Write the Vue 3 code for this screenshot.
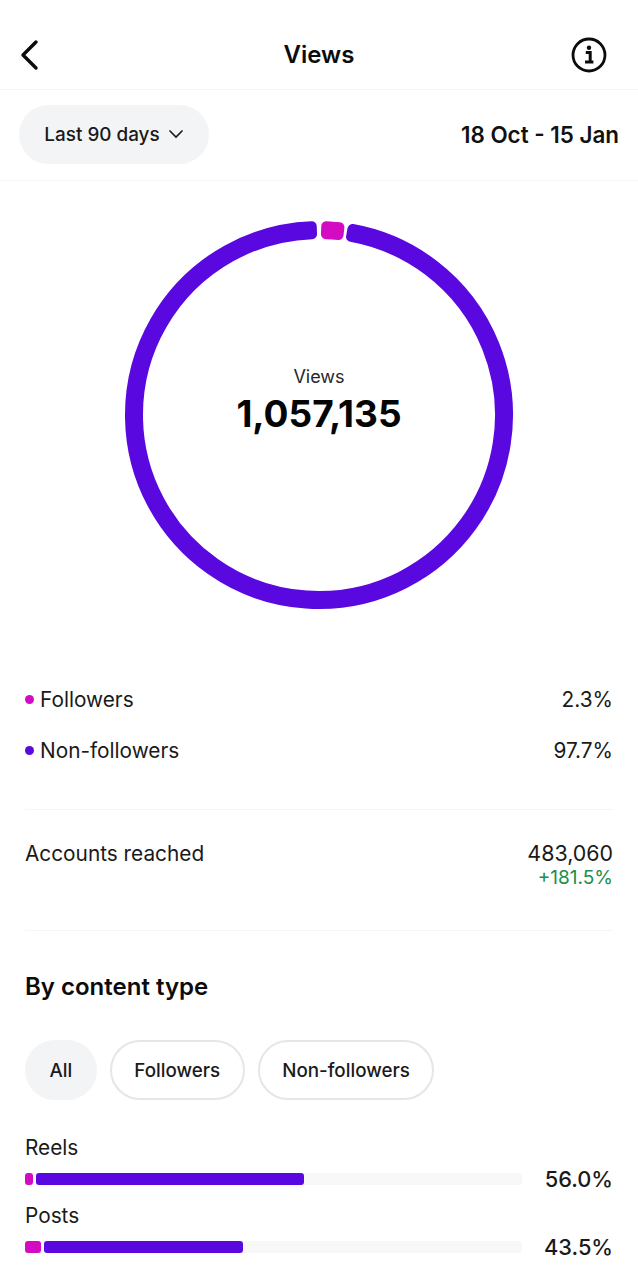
<script setup>
const ringCenter = 195
// ring segments in degrees from the top, filled then stroked so the ends come out rounded
const arc = (from, to) => {
  const outer = 189
  const inner = 181
  const pt = (r, deg) => {
    const a = (deg * Math.PI) / 180
    return `${(ringCenter + r * Math.sin(a)).toFixed(2)} ${(ringCenter - r * Math.cos(a)).toFixed(2)}`
  }
  const large = to - from > 180 ? 1 : 0
  return `M${pt(outer, from)} A${outer} ${outer} 0 ${large} 1 ${pt(outer, to)} L${pt(inner, to)} A${inner} ${inner} 0 ${large} 0 ${pt(inner, from)} Z`
}

const segments = [
  { color: '#5a08e0', d: arc(10.2, 357.8) },
  { color: '#d30cc4', d: arc(2.2, 6.2) }
]

const legend = [
  { label: 'Followers', value: '2.3%', color: '#d30cc4' },
  { label: 'Non-followers', value: '97.7%', color: '#5a08e0' }
]

const chips = ['All', 'Followers', 'Non-followers']

const content = [
  { label: 'Reels', value: '56.0%', pink: 8, purple: 268 },
  { label: 'Posts', value: '43.5%', pink: 16, purple: 199 }
]
</script>

<template>
  <div class="page">
    <header class="topbar">
      <svg class="back" width="22" height="32" viewBox="0 0 22 32">
        <path d="M17 3 L4 16 L17 29" fill="none" stroke="#0c0c0c" stroke-width="3.4" stroke-linecap="round" stroke-linejoin="round" />
      </svg>
      <h1 class="title">Views</h1>
      <svg class="info" width="36" height="36" viewBox="0 0 36 36">
        <circle cx="18" cy="18" r="16" fill="none" stroke="#0c0c0c" stroke-width="2.8" />
        <circle cx="18" cy="10.8" r="2.2" fill="#0c0c0c" />
        <path d="M14.8 15.6 H19.2 V24.4 M14 25 H22.4" fill="none" stroke="#0c0c0c" stroke-width="3" />
      </svg>
    </header>

    <div class="filter-row">
      <button class="range">
        Last 90 days
        <svg width="16" height="10" viewBox="0 0 16 10">
          <path d="M1.5 1.5 L8 8 L14.5 1.5" fill="none" stroke="#1a1a1a" stroke-width="1.6" />
        </svg>
      </button>
      <span class="dates">18 Oct - 15 Jan</span>
    </div>

    <section class="ring-wrap">
      <div class="ring">
        <svg width="390" height="390" viewBox="0 0 390 390">
          <path
            v-for="s in segments"
            :key="s.color"
            :d="s.d"
            :fill="s.color"
            :stroke="s.color"
            stroke-width="10"
            stroke-linejoin="round"
          />
        </svg>
        <div class="ring-text">
          <span class="ring-label">Views</span>
          <span class="ring-value">1,057,135</span>
        </div>
      </div>
    </section>

    <section class="legend">
      <div v-for="item in legend" :key="item.label" class="legend-row">
        <span class="legend-name">
          <i class="dot" :style="{ background: item.color }"></i>{{ item.label }}
        </span>
        <span>{{ item.value }}</span>
      </div>
    </section>

    <section class="reached">
      <span>Accounts reached</span>
      <div class="reached-right">
        <span class="reached-num">483,060</span>
        <span class="delta">+181.5%</span>
      </div>
    </section>

    <section class="types">
      <h2 class="types-title">By content type</h2>
      <div class="chips">
        <button v-for="(c, i) in chips" :key="c" class="chip" :class="{ active: i === 0 }">{{ c }}</button>
      </div>
      <div v-for="row in content" :key="row.label" class="type-row">
        <div class="type-label">{{ row.label }}</div>
        <div class="type-line">
          <div class="track">
            <div class="bar pink" :style="{ width: row.pink + 'px' }"></div>
            <div class="bar purple" :style="{ width: row.purple + 'px' }"></div>
          </div>
          <span class="type-value">{{ row.value }}</span>
        </div>
      </div>
    </section>
  </div>
</template>

<style scoped>
.page {
  width: 638px;
  height: 1280px;
  overflow: hidden;
  background: #fff;
  color: #111;
  font-family: Inter, "Liberation Sans", sans-serif;
}

.topbar {
  height: 90px;
  box-sizing: border-box;
  padding: 20px 19px 0;
  display: grid;
  grid-template-columns: minmax(0, 1fr) auto minmax(0, 1fr);
  align-items: center;
  border-bottom: 1px solid #f5f5f5;
}

.info {
  justify-self: end;
  margin-right: 12px;
}

.title {
  margin: 1px 0 0;
  font-size: 24px;
  line-height: 30px;
  font-weight: 600;
  color: #0c0c0c;
}

.filter-row {
  height: 91px;
  box-sizing: border-box;
  padding: 0 19px 2px;
  display: flex;
  justify-content: space-between;
  align-items: center;
  border-bottom: 1px solid #f5f5f5;
}

.range {
  height: 59px;
  width: 190px;
  padding: 0;
  border: none;
  border-radius: 30px;
  background: #f3f4f6;
  display: flex;
  align-items: center;
  justify-content: center;
  gap: 8px;
  font-family: inherit;
  font-size: 18.9px;
  font-weight: 500;
  color: #1a1a1a;
}

.dates {
  font-size: 22.4px;
  font-weight: 600;
  color: #111;
}

.ring-wrap {
  height: 458px;
  padding-top: 39px;
  box-sizing: border-box;
  display: flex;
  justify-content: center;
}

.ring {
  position: relative;
  width: 390px;
  height: 390px;
}

.ring-text {
  position: absolute;
  inset: 0;
  padding-bottom: 29px;
  box-sizing: border-box;
  display: flex;
  flex-direction: column;
  align-items: center;
  justify-content: center;
}

.ring-label {
  font-size: 18px;
  line-height: 22px;
  color: #262626;
}

.ring-value {
  margin-top: 5px;
  font-size: 37px;
  line-height: 42px;
  font-weight: 700;
  color: #050505;
}

.legend {
  margin: 0 25px;
  padding-top: 35px;
  height: 171px;
  box-sizing: border-box;
  border-bottom: 1px solid #f5f5f5;
}

.legend-row {
  height: 51px;
  display: flex;
  justify-content: space-between;
  align-items: center;
  font-size: 20.8px;
  color: #1a1a1a;
}

.legend-name {
  display: flex;
  align-items: center;
}

.dot {
  width: 9px;
  height: 9px;
  border-radius: 50%;
  margin-right: 6px;
}

.reached {
  margin: 0 25px;
  height: 121px;
  box-sizing: border-box;
  padding-top: 30px;
  display: flex;
  justify-content: space-between;
  align-items: flex-start;
  font-size: 20.8px;
  line-height: 27px;
  color: #1a1a1a;
  border-bottom: 1px solid #f5f5f5;
}

.reached-right {
  display: flex;
  flex-direction: column;
  align-items: flex-end;
}

.reached-num {
  font-size: 21.4px;
}

.delta {
  font-size: 19px;
  line-height: 21px;
  color: #1a9048;
}

.types {
  padding: 40px 25px 0;
}

.types-title {
  margin: 0;
  font-size: 24px;
  line-height: 32px;
  font-weight: 600;
  color: #0c0c0c;
}

.chips {
  margin-top: 37px;
  display: flex;
  gap: 13px;
}

.chip {
  height: 60px;
  padding: 0 22.5px;
  border: 2px solid #e6e6e6;
  border-radius: 30px;
  background: #fff;
  font-family: inherit;
  font-size: 18.8px;
  font-weight: 500;
  color: #1a1a1a;
}

.chip.active {
  border-color: #f3f4f6;
  background: #f3f4f6;
}

.type-row {
  height: 68px;
}

.chips + .type-row {
  margin-top: 34px;
}

.type-label {
  height: 32px;
  font-size: 20.8px;
  line-height: 28px;
  color: #1a1a1a;
}

.type-line {
  display: flex;
  align-items: center;
  justify-content: space-between;
}

.track {
  width: 497px;
  height: 12px;
  background: #f8f8f8;
  display: flex;
  gap: 3px;
  border-radius: 3px;
}

.bar {
  height: 12px;
  border-radius: 3px;
}

.pink {
  background: #d30cc4;
}

.purple {
  background: #5a08e0;
}

.type-value {
  font-size: 21.8px;
  font-weight: 500;
  color: #1a1a1a;
}
</style>

<style>
body {
  background: #fff;
}
</style>
